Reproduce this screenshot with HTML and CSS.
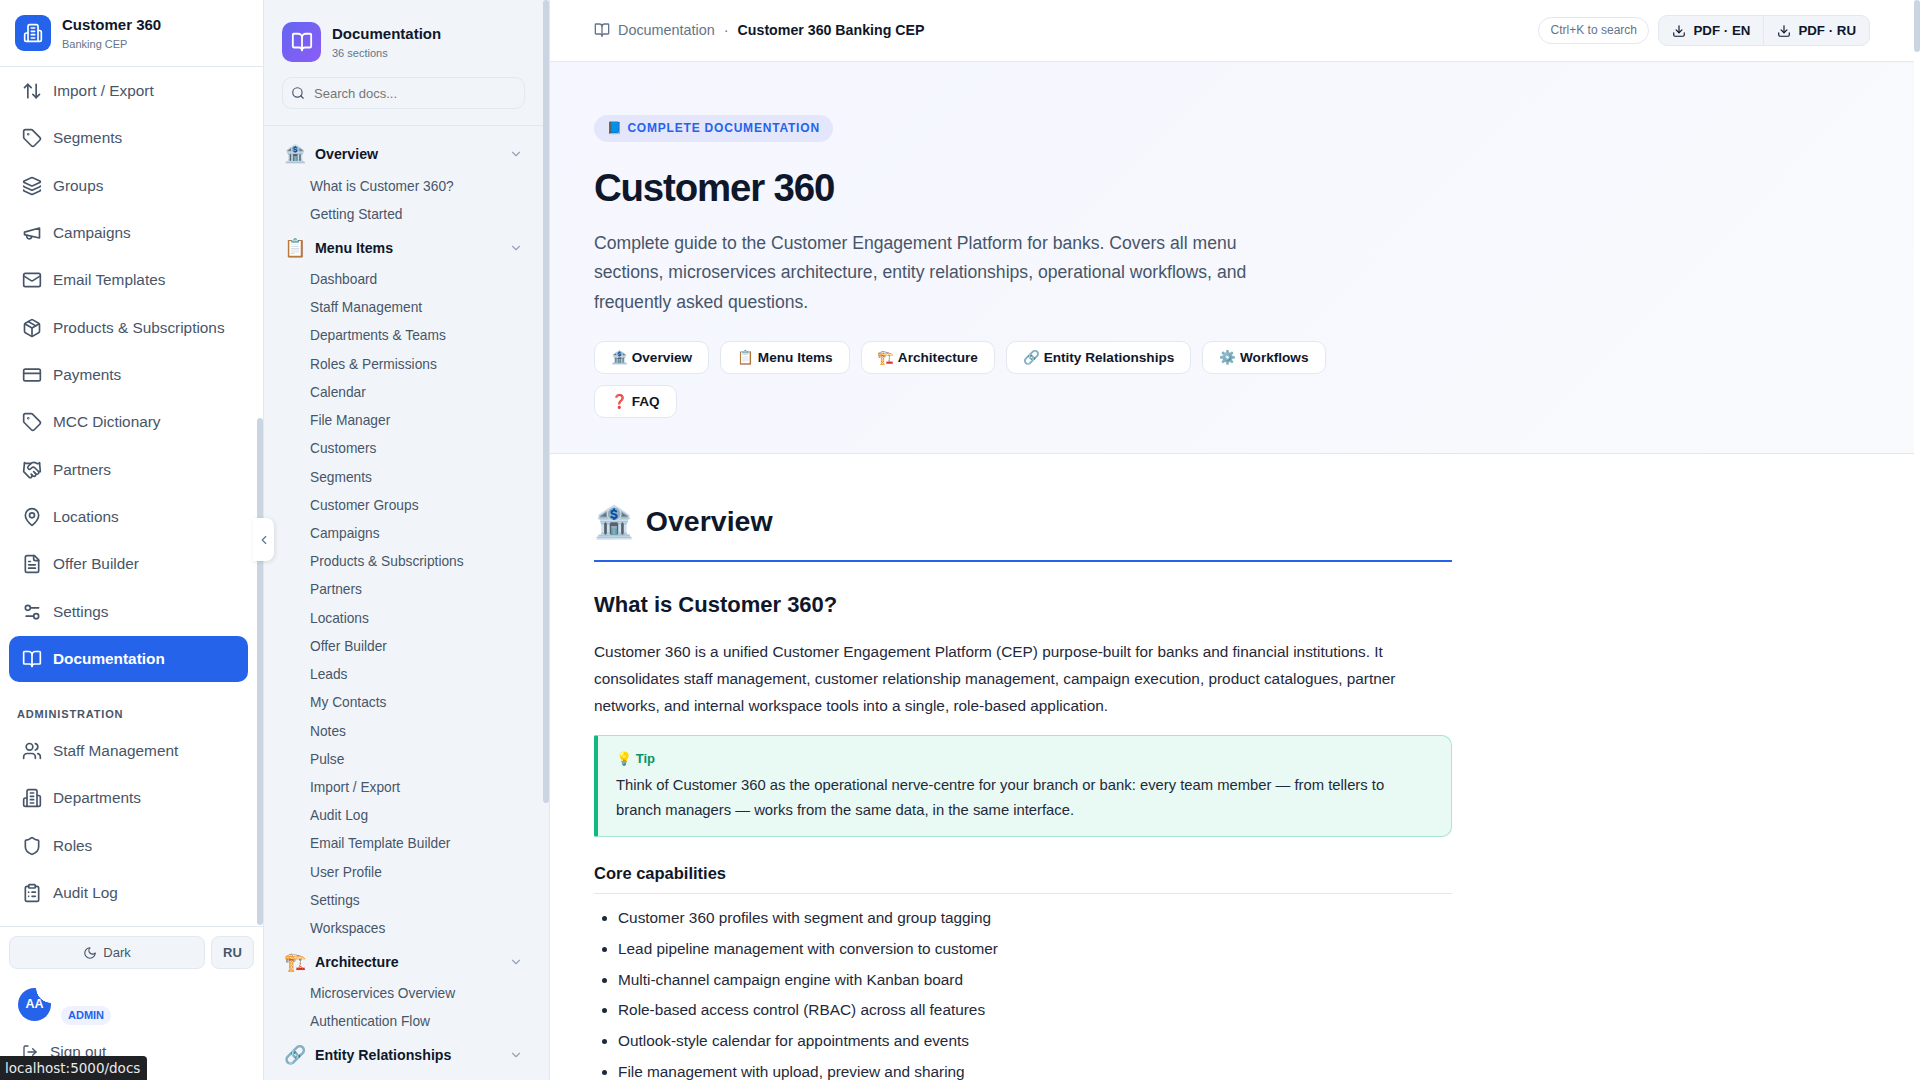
FILE: index.html
```html
<!DOCTYPE html>
<html lang="en">
<head>
<meta charset="utf-8">
<title>Customer 360 Documentation</title>
<link rel="stylesheet" href="styles.css">
</head>
<body>
<svg class="sprite" aria-hidden="true">
  <symbol id="i-updown" viewBox="0 0 24 24"><path d="m21 16-4 4-4-4"/><path d="M17 20V4"/><path d="m3 8 4-4 4 4"/><path d="M7 4v16"/></symbol>
  <symbol id="i-tag" viewBox="0 0 24 24"><path d="M12.586 2.586A2 2 0 0 0 11.172 2H4a2 2 0 0 0-2 2v7.172a2 2 0 0 0 .586 1.414l8.704 8.704a2.426 2.426 0 0 0 3.42 0l6.58-6.58a2.426 2.426 0 0 0 0-3.42z"/><circle cx="7.5" cy="7.5" r=".5"/></symbol>
  <symbol id="i-layers" viewBox="0 0 24 24"><path d="M12.83 2.18a2 2 0 0 0-1.66 0L2.6 6.08a1 1 0 0 0 0 1.83l8.58 3.91a2 2 0 0 0 1.66 0l8.58-3.9a1 1 0 0 0 0-1.83z"/><path d="M2 12a1 1 0 0 0 .58.91l8.6 3.91a2 2 0 0 0 1.65 0l8.58-3.9A1 1 0 0 0 22 12"/><path d="M2 17a1 1 0 0 0 .58.91l8.6 3.91a2 2 0 0 0 1.65 0l8.58-3.9A1 1 0 0 0 22 17"/></symbol>
  <symbol id="i-megaphone" viewBox="0 0 24 24"><path d="m3 11 18-5v12L3 14v-3z"/><path d="M11.6 16.8a3 3 0 1 1-5.8-1.6"/></symbol>
  <symbol id="i-mail" viewBox="0 0 24 24"><rect x="2" y="4" width="20" height="16" rx="2"/><path d="m22 7-8.97 5.7a1.94 1.94 0 0 1-2.06 0L2 7"/></symbol>
  <symbol id="i-package" viewBox="0 0 24 24"><path d="M11 21.73a2 2 0 0 0 2 0l7-4A2 2 0 0 0 21 16V8a2 2 0 0 0-1-1.73l-7-4a2 2 0 0 0-2 0l-7 4A2 2 0 0 0 3 8v8a2 2 0 0 0 1 1.73z"/><path d="M12 22V12"/><path d="M3.3 7 12 12l8.7-5"/><path d="m7.5 4.27 9 5.15"/></symbol>
  <symbol id="i-card" viewBox="0 0 24 24"><rect x="2" y="5" width="20" height="14" rx="2"/><path d="M2 10h20"/></symbol>
  <symbol id="i-handshake" viewBox="0 0 24 24"><path d="m11 17 2 2a1 1 0 1 0 3-3"/><path d="m14 14 2.5 2.5a1 1 0 1 0 3-3l-3.88-3.88a3 3 0 0 0-4.24 0l-.88.88a1 1 0 1 1-3-3l2.81-2.81a5.79 5.79 0 0 1 7.06-.87l.47.28a2 2 0 0 0 1.42.25L21 4"/><path d="m21 3 1 11h-2"/><path d="M3 3 2 14l6.5 6.5a1 1 0 1 0 3-3"/><path d="M3 4h8"/></symbol>
  <symbol id="i-pin" viewBox="0 0 24 24"><path d="M20 10c0 4.993-5.539 10.193-7.399 11.799a1 1 0 0 1-1.202 0C9.539 20.193 4 14.993 4 10a8 8 0 0 1 16 0"/><circle cx="12" cy="10" r="3"/></symbol>
  <symbol id="i-file" viewBox="0 0 24 24"><path d="M15 2H6a2 2 0 0 0-2 2v16a2 2 0 0 0 2 2h12a2 2 0 0 0 2-2V7Z"/><path d="M14 2v4a2 2 0 0 0 2 2h4"/><path d="M10 9H8"/><path d="M16 13H8"/><path d="M16 17H8"/></symbol>
  <symbol id="i-settings" viewBox="0 0 24 24"><path d="M20 7h-9"/><path d="M14 17H5"/><circle cx="17" cy="17" r="3"/><circle cx="7" cy="7" r="3"/></symbol>
  <symbol id="i-book" viewBox="0 0 24 24"><path d="M12 7v14"/><path d="M3 18a1 1 0 0 1-1-1V4a1 1 0 0 1 1-1h5a4 4 0 0 1 4 4 4 4 0 0 1 4-4h5a1 1 0 0 1 1 1v13a1 1 0 0 1-1 1h-6a3 3 0 0 0-3 3 3 3 0 0 0-3-3z"/></symbol>
  <symbol id="i-users" viewBox="0 0 24 24"><path d="M16 21v-2a4 4 0 0 0-4-4H6a4 4 0 0 0-4 4v2"/><circle cx="9" cy="7" r="4"/><path d="M22 21v-2a4 4 0 0 0-3-3.87"/><path d="M16 3.13a4 4 0 0 1 0 7.75"/></symbol>
  <symbol id="i-building" viewBox="0 0 24 24"><path d="M6 22V4a2 2 0 0 1 2-2h8a2 2 0 0 1 2 2v18Z"/><path d="M6 12H4a2 2 0 0 0-2 2v6a2 2 0 0 0 2 2h2"/><path d="M18 9h2a2 2 0 0 1 2 2v9a2 2 0 0 1-2 2h-2"/><path d="M10 6h4"/><path d="M10 10h4"/><path d="M10 14h4"/><path d="M10 18h4"/></symbol>
  <symbol id="i-shield" viewBox="0 0 24 24"><path d="M20 13c0 5-3.5 7.5-7.66 8.95a1 1 0 0 1-.67-.01C7.5 20.5 4 18 4 13V6a1 1 0 0 1 1-1c2 0 4.5-1.2 6.24-2.72a1.17 1.17 0 0 1 1.52 0C14.51 3.81 17 5 19 5a1 1 0 0 1 1 1z"/></symbol>
  <symbol id="i-clipboard" viewBox="0 0 24 24"><rect x="8" y="2" width="8" height="4" rx="1"/><path d="M16 4h2a2 2 0 0 1 2 2v14a2 2 0 0 1-2 2H6a2 2 0 0 1-2-2V6a2 2 0 0 1 2-2h2"/><path d="M12 11h4"/><path d="M12 16h4"/><path d="M8 11h.01"/><path d="M8 16h.01"/></symbol>
  <symbol id="i-moon" viewBox="0 0 24 24"><path d="M12 3a6 6 0 0 0 9 9 9 9 0 1 1-9-9Z"/></symbol>
  <symbol id="i-logout" viewBox="0 0 24 24"><path d="M9 21H5a2 2 0 0 1-2-2V5a2 2 0 0 1 2-2h4"/><path d="m16 17 5-5-5-5"/><path d="M21 12H9"/></symbol>
  <symbol id="i-search" viewBox="0 0 24 24"><circle cx="11" cy="11" r="8"/><path d="m21 21-4.3-4.3"/></symbol>
  <symbol id="i-chevdown" viewBox="0 0 24 24"><path d="m6 9 6 6 6-6"/></symbol>
  <symbol id="i-chevleft" viewBox="0 0 24 24"><path d="m15 18-6-6 6-6"/></symbol>
  <symbol id="i-download" viewBox="0 0 24 24"><path d="M21 15v4a2 2 0 0 1-2 2H5a2 2 0 0 1-2-2v-4"/><path d="m7 10 5 5 5-5"/><path d="M12 15V3"/></symbol>
</svg>

<aside class="sidebar">
  <div class="brand">
    <span class="brand-mark"><svg class="ico ico-20"><use href="#i-building"/></svg></span>
    <div>
      <div class="brand-title">Customer 360</div>
      <div class="brand-sub">Banking CEP</div>
    </div>
  </div>
  <nav class="side-nav">
    <a class="side-item"><svg class="ico ico-20"><use href="#i-updown"/></svg>Import / Export</a>
    <a class="side-item"><svg class="ico ico-20"><use href="#i-tag"/></svg>Segments</a>
    <a class="side-item"><svg class="ico ico-20"><use href="#i-layers"/></svg>Groups</a>
    <a class="side-item"><svg class="ico ico-20"><use href="#i-megaphone"/></svg>Campaigns</a>
    <a class="side-item"><svg class="ico ico-20"><use href="#i-mail"/></svg>Email Templates</a>
    <a class="side-item"><svg class="ico ico-20"><use href="#i-package"/></svg>Products &amp; Subscriptions</a>
    <a class="side-item"><svg class="ico ico-20"><use href="#i-card"/></svg>Payments</a>
    <a class="side-item"><svg class="ico ico-20"><use href="#i-tag"/></svg>MCC Dictionary</a>
    <a class="side-item"><svg class="ico ico-20"><use href="#i-handshake"/></svg>Partners</a>
    <a class="side-item"><svg class="ico ico-20"><use href="#i-pin"/></svg>Locations</a>
    <a class="side-item"><svg class="ico ico-20"><use href="#i-file"/></svg>Offer Builder</a>
    <a class="side-item"><svg class="ico ico-20"><use href="#i-settings"/></svg>Settings</a>
    <a class="side-item is-active"><svg class="ico ico-20"><use href="#i-book"/></svg>Documentation</a>
    <div class="side-label">ADMINISTRATION</div>
    <a class="side-item"><svg class="ico ico-20"><use href="#i-users"/></svg>Staff Management</a>
    <a class="side-item"><svg class="ico ico-20"><use href="#i-building"/></svg>Departments</a>
    <a class="side-item"><svg class="ico ico-20"><use href="#i-shield"/></svg>Roles</a>
    <a class="side-item"><svg class="ico ico-20"><use href="#i-clipboard"/></svg>Audit Log</a>
  </nav>
  <div class="side-thumb"></div>
  <div class="side-foot">
    <div class="foot-row">
      <button class="foot-btn foot-theme"><svg class="ico ico-14"><use href="#i-moon"/></svg>Dark</button>
      <button class="foot-btn foot-lang">RU</button>
    </div>
    <div class="user-row">
      <span class="avatar">AA</span>
      <span class="role-tag">ADMIN</span>
    </div>
    <a class="signout"><svg class="ico ico-16"><use href="#i-logout"/></svg>Sign out</a>
  </div>
</aside>
<button class="collapse"><svg class="ico ico-14"><use href="#i-chevleft"/></svg></button>

<aside class="docnav">
  <div class="docnav-body">
    <div class="docnav-head">
      <div class="docnav-brand">
        <span class="docnav-mark"><svg class="ico ico-22"><use href="#i-book"/></svg></span>
        <div>
          <div class="docnav-title">Documentation</div>
          <div class="docnav-sub">36 sections</div>
        </div>
      </div>
      <label class="docsearch"><svg class="ico ico-14"><use href="#i-search"/></svg><span>Search docs...</span></label>
    </div>
    <div class="doclist">
      <div class="dochead"><span class="doc-emoji">🏦</span><span class="doc-name">Overview</span><svg class="ico ico-14"><use href="#i-chevdown"/></svg></div>
      <a class="doclink">What is Customer 360?</a>
      <a class="doclink">Getting Started</a>
      <div class="dochead"><span class="doc-emoji">📋</span><span class="doc-name">Menu Items</span><svg class="ico ico-14"><use href="#i-chevdown"/></svg></div>
      <a class="doclink">Dashboard</a>
      <a class="doclink">Staff Management</a>
      <a class="doclink">Departments &amp; Teams</a>
      <a class="doclink">Roles &amp; Permissions</a>
      <a class="doclink">Calendar</a>
      <a class="doclink">File Manager</a>
      <a class="doclink">Customers</a>
      <a class="doclink">Segments</a>
      <a class="doclink">Customer Groups</a>
      <a class="doclink">Campaigns</a>
      <a class="doclink">Products &amp; Subscriptions</a>
      <a class="doclink">Partners</a>
      <a class="doclink">Locations</a>
      <a class="doclink">Offer Builder</a>
      <a class="doclink">Leads</a>
      <a class="doclink">My Contacts</a>
      <a class="doclink">Notes</a>
      <a class="doclink">Pulse</a>
      <a class="doclink">Import / Export</a>
      <a class="doclink">Audit Log</a>
      <a class="doclink">Email Template Builder</a>
      <a class="doclink">User Profile</a>
      <a class="doclink">Settings</a>
      <a class="doclink">Workspaces</a>
      <div class="dochead"><span class="doc-emoji">🏗️</span><span class="doc-name">Architecture</span><svg class="ico ico-14"><use href="#i-chevdown"/></svg></div>
      <a class="doclink">Microservices Overview</a>
      <a class="doclink">Authentication Flow</a>
      <div class="dochead"><span class="doc-emoji">🔗</span><span class="doc-name">Entity Relationships</span><svg class="ico ico-14"><use href="#i-chevdown"/></svg></div>
    </div>
  </div>
  <div class="track"><div class="thumb thumb-doc"></div></div>
</aside>

<div class="main">
  <div class="main-body">
    <header class="topbar">
      <div class="crumbs">
        <svg class="ico ico-16"><use href="#i-book"/></svg>
        <span class="crumb">Documentation</span>
        <span class="crumb-dot">·</span>
        <strong class="crumb-now">Customer 360 Banking CEP</strong>
      </div>
      <div class="top-actions">
        <span class="kbd-hint">Ctrl+K to search</span>
        <div class="pdf-group">
          <button class="pdf-btn"><svg class="ico ico-14"><use href="#i-download"/></svg>PDF · EN</button>
          <button class="pdf-btn"><svg class="ico ico-14"><use href="#i-download"/></svg>PDF · RU</button>
        </div>
      </div>
    </header>
    <section class="hero">
      <div class="hero-badge">📘 COMPLETE DOCUMENTATION</div>
      <h1 class="hero-title">Customer 360</h1>
      <p class="hero-text">Complete guide to the Customer Engagement Platform for banks. Covers all menu sections, microservices architecture, entity relationships, operational workflows, and frequently asked questions.</p>
      <div class="hero-pills">
        <a class="pill">🏦 Overview</a>
        <a class="pill">📋 Menu Items</a>
        <a class="pill">🏗️ Architecture</a>
        <a class="pill">🔗 Entity Relationships</a>
        <a class="pill">⚙️ Workflows</a>
        <a class="pill">❓ FAQ</a>
      </div>
    </section>
    <article class="doc">
      <h2 class="doc-h2"><span class="h2-emoji">🏦</span>Overview</h2>
      <h3 class="doc-h3">What is Customer 360?</h3>
      <p class="doc-p">Customer 360 is a unified Customer Engagement Platform (CEP) purpose-built for banks and financial institutions. It consolidates staff management, customer relationship management, campaign execution, product catalogues, partner networks, and internal workspace tools into a single, role-based application.</p>
      <div class="callout">
        <div class="callout-label">💡 Tip</div>
        <div class="callout-text">Think of Customer 360 as the operational nerve-centre for your branch or bank: every team member — from tellers to branch managers — works from the same data, in the same interface.</div>
      </div>
      <h4 class="doc-h4">Core capabilities</h4>
      <ul class="doc-ul">
        <li>Customer 360 profiles with segment and group tagging</li>
        <li>Lead pipeline management with conversion to customer</li>
        <li>Multi-channel campaign engine with Kanban board</li>
        <li>Role-based access control (RBAC) across all features</li>
        <li>Outlook-style calendar for appointments and events</li>
        <li>File management with upload, preview and sharing</li>
      </ul>
    </article>
  </div>
  <div class="track track-main"><div class="thumb thumb-main"></div></div>
</div>
<div class="status">localhost:5000/docs</div>
</body>
</html>
```

FILE: styles.css
```css
* { box-sizing: border-box; }
html, body { height: 100%; }
body {
  margin: 0;
  display: flex;
  height: 100vh;
  overflow: hidden;
  background: #fff;
  color: #0f172a;
  font-family: "Liberation Sans", Arial, "Noto Color Emoji", sans-serif;
}
a { color: inherit; text-decoration: none; }
button { font-family: inherit; cursor: pointer; }
h1, h2, h3, h4, p, ul { margin: 0; }
.sprite { position: absolute; width: 0; height: 0; overflow: hidden; }
.ico { fill: none; stroke: currentColor; stroke-width: 2; stroke-linecap: round; stroke-linejoin: round; flex: none; }
.ico-14 { width: 14px; height: 14px; }
.ico-16 { width: 16px; height: 16px; }
.ico-20 { width: 20px; height: 20px; }
.ico-22 { width: 22px; height: 22px; }

/* primary sidebar */
.sidebar {
  position: relative;
  flex: none;
  width: 264px;
  display: flex;
  flex-direction: column;
  background: #fff;
  border-right: 1px solid #e2e8f0;
}
.brand {
  flex: none;
  height: 67px;
  display: flex;
  align-items: center;
  gap: 11px;
  padding: 0 15px;
  border-bottom: 1px solid #e2e8f0;
}
.brand-mark {
  width: 36px;
  height: 36px;
  border-radius: 9px;
  background: #2563eb;
  color: #fff;
  display: flex;
  align-items: center;
  justify-content: center;
}
.brand-title { font-size: 15px; font-weight: 700; line-height: 18px; margin-top: 1px; color: #0f172a; }
.brand-sub { font-size: 11px; line-height: 14px; margin-top: 3px; color: #64748b; }
.side-nav {
  flex: 1;
  min-height: 0;
  overflow: hidden;
  display: flex;
  flex-direction: column;
  gap: 2px;
  padding: 1.3px 15px 0 9px;
}
.side-item {
  flex: none;
  height: 45.33px;
  display: flex;
  align-items: center;
  gap: 11px;
  padding-left: 13px;
  border-radius: 10px;
  font-size: 15.36px;
  color: #475569;
}
.side-item.is-active { background: #2563eb; color: #fff; font-weight: 700; }
.side-label {
  flex: none;
  height: 42.7px;
  padding: 24px 0 0 8px;
  font-size: 11px;
  line-height: 13px;
  font-weight: 700;
  letter-spacing: 0.85px;
  color: #475569;
}
.side-thumb {
  position: absolute;
  top: 418px;
  right: 0;
  width: 6px;
  height: 507px;
  border-radius: 3px;
  background: #cbd5e1;
}
.side-foot { flex: none; height: 154px; border-top: 1px solid #e2e8f0; padding: 9px 9px 0; overflow: hidden; }
.foot-row { display: flex; gap: 6px; }
.foot-btn {
  height: 33px;
  border: 1px solid #e2e8f0;
  border-radius: 8px;
  background: #f1f5f9;
  color: #475569;
  font-size: 13px;
  display: flex;
  align-items: center;
  justify-content: center;
  gap: 6px;
  padding: 0;
}
.foot-theme { flex: 1; }
.foot-lang { width: 43px; font-weight: 700; }
.user-row { display: flex; align-items: flex-end; gap: 10px; margin: 19px 0 0 9px; height: 40px; }
.avatar {
  width: 33px;
  height: 33px;
  border-radius: 50%;
  background: radial-gradient(circle at 33px 0, #fff 14.5px, #2563eb 15px);
  color: #fff;
  font-size: 12.5px;
  font-weight: 700;
  display: flex;
  align-items: center;
  justify-content: center;
  padding-bottom: 2px;
  margin-bottom: 7px;
}
.role-tag {
  height: 19px;
  line-height: 19px;
  padding: 0 7px;
  border-radius: 10px;
  background: #eef2ff;
  color: #2563eb;
  font-size: 11px;
  font-weight: 700;
  margin-bottom: 3px;
}
.signout { display: flex; align-items: center; gap: 12px; margin: 15px 0 0 13px; font-size: 15.36px; color: #475569; }
.collapse {
  position: absolute;
  left: 253px;
  top: 518px;
  width: 21px;
  height: 43px;
  border: 0;
  border-radius: 0 8px 8px 0;
  background: #fff;
  color: #64748b;
  box-shadow: 1px 1px 4px rgba(15, 23, 42, 0.12);
  display: flex;
  align-items: center;
  justify-content: center;
  padding: 0;
  z-index: 3;
}

/* documentation nav */
.docnav {
  flex: none;
  width: 286px;
  display: flex;
  background: #f1f5f9;
  border-right: 1px solid #e2e8f0;
}
.docnav-body { flex: 1; min-width: 0; overflow: hidden; }
.docnav-head { height: 126px; padding: 22px 18px 0; border-bottom: 1px solid #e2e8f0; }
.docnav-brand { display: flex; align-items: center; gap: 11px; }
.docnav-mark {
  width: 39px;
  height: 40px;
  border-radius: 10px;
  background: linear-gradient(135deg, #6366f1, #8b5cf6);
  color: #fff;
  display: flex;
  align-items: center;
  justify-content: center;
}
.docnav-title { font-size: 15px; line-height: 18px; font-weight: 700; margin-top: 1px; color: #0f172a; }
.docnav-sub { font-size: 11px; line-height: 14px; margin-top: 3px; color: #64748b; }
.docsearch {
  display: flex;
  align-items: center;
  gap: 9px;
  height: 32px;
  margin-top: 15px;
  padding: 0 8px;
  border: 1px solid #e2e8f0;
  border-radius: 10px;
  font-size: 13px;
  color: #475569;
}
.docsearch span { color: #757575; }
.doclist { padding-top: 11px; }
.dochead {
  height: 33.8px;
  display: flex;
  align-items: center;
  padding: 0 20px 0 20px;
  color: #94a3b8;
}
.dochead:first-child { margin-bottom: 1px; }
.dochead:not(:first-child) { margin-top: 3px; }
.doc-emoji { width: 31px; flex: none; font-size: 18px; line-height: 20px; }
.doc-name { flex: 1; font-size: 14.2px; font-weight: 700; color: #0f172a; }
.doclink {
  display: block;
  height: 28.23px;
  line-height: 30px;
  padding-left: 46px;
  font-size: 13.76px;
  color: #475569;
}
.track { flex: none; width: 6px; }
.thumb { width: 6px; border-radius: 3px; background: #cbd5e1; }
.thumb-doc { height: 803px; }
.thumb-main { height: 52px; }

/* main */
.main { flex: 1; min-width: 0; display: flex; }
.main-body { flex: 1; min-width: 0; overflow: hidden; }
.topbar {
  height: 62px;
  display: flex;
  align-items: center;
  justify-content: space-between;
  padding: 0 44px;
  border-bottom: 1px solid #e2e8f0;
  background: #fff;
}
.crumbs { display: flex; align-items: center; font-size: 14.4px; line-height: 18px; margin-top: -2px; color: #64748b; }
.crumb { margin-left: 8px; }
.crumb-dot { margin: 0 9px; }
.crumb-now { font-size: 14.2px; color: #0f172a; }
.top-actions { display: flex; align-items: center; gap: 9px; }
.kbd-hint {
  height: 27px;
  line-height: 25px;
  padding: 0 11.5px;
  border: 1px solid #e2e8f0;
  border-radius: 14px;
  font-size: 12px;
  color: #64748b;
}
.pdf-group { display: flex; height: 31px; border: 1px solid #e2e8f0; border-radius: 9px; background: #f1f5f9; overflow: hidden; }
.pdf-btn {
  border: 0;
  background: transparent;
  display: flex;
  align-items: center;
  gap: 7px;
  padding: 0 13px;
  font-size: 13.3px;
  font-weight: 700;
  color: #0f172a;
}
.pdf-btn + .pdf-btn { border-left: 1px solid #e2e8f0; }

.hero {
  height: 392px;
  padding: 53px 44px 0;
  background: linear-gradient(135deg, #f5f6ff, #f8fafc);
  border-bottom: 1px solid #e2e8f0;
}
.hero-badge {
  display: inline-block;
  height: 27px;
  line-height: 27px;
  padding: 0 13.5px;
  border-radius: 14px;
  background: #e4e6fb;
  color: #2563eb;
  font-size: 12px;
  font-weight: 700;
  letter-spacing: 0.8px;
}
.hero-title { font-size: 38.4px; line-height: 46px; margin-top: 23px; font-weight: 700; color: #0f172a; letter-spacing: -0.03em; }
.hero-text { max-width: 680px; margin-top: 18px; font-size: 17.6px; line-height: 29.4px; color: #475569; }
.hero-pills { display: flex; flex-wrap: wrap; gap: 11px; max-width: 800px; margin-top: 23.5px; }
.pill {
  height: 33px;
  line-height: 31px;
  padding: 0 16px;
  border: 1px solid #e2e8f0;
  border-radius: 10px;
  background: #fff;
  font-size: 13.6px;
  font-weight: 700;
  color: #0f172a;
}

.doc { max-width: 946px; padding: 0 44px; }
.doc-h2 {
  display: flex;
  align-items: center;
  gap: 12px;
  height: 108px;
  padding-top: 29px;
  border-bottom: 2px solid #2563eb;
  font-size: 28.5px;
  font-weight: 700;
  color: #0f172a;
}
.h2-emoji { font-size: 32px; }
.doc-h3 { margin-top: 29px; font-size: 22px; line-height: 27px; font-weight: 700; color: #0f172a; }
.doc-p { margin-top: 21px; font-size: 15.36px; line-height: 26.8px; color: #1e293b; }
.callout {
  margin-top: 16px;
  height: 102px;
  padding: 13px 24px 13px 18px;
  background: #e9f9f3;
  border: 1px solid #a7e6cf;
  border-left: 4px solid #10b981;
  border-radius: 2px 10px 10px 2px;
}
.callout-label { font-size: 13px; line-height: 20px; font-weight: 700; color: #059669; }
.callout-text { font-size: 14.8px; line-height: 25px; color: #1e293b; margin-top: 4px; }
.doc-h4 { margin-top: 25px; height: 32px; font-size: 16.5px; line-height: 22px; font-weight: 700; color: #0f172a; border-bottom: 1px solid #e2e8f0; }
.doc-ul { margin-top: 11px; padding-left: 24px; font-size: 15.36px; line-height: 26.8px; color: #1e293b; }
.doc-ul li { margin-bottom: 3.9px; }

.status {
  position: fixed;
  left: 0;
  bottom: 0;
  height: 24px;
  line-height: 24px;
  padding: 0 7px 0 5px;
  border-radius: 0 4px 0 0;
  background: #202124;
  color: #e8eaed;
  font-family: "DejaVu Sans", sans-serif;
  font-size: 13.5px;
  z-index: 5;
}
```
